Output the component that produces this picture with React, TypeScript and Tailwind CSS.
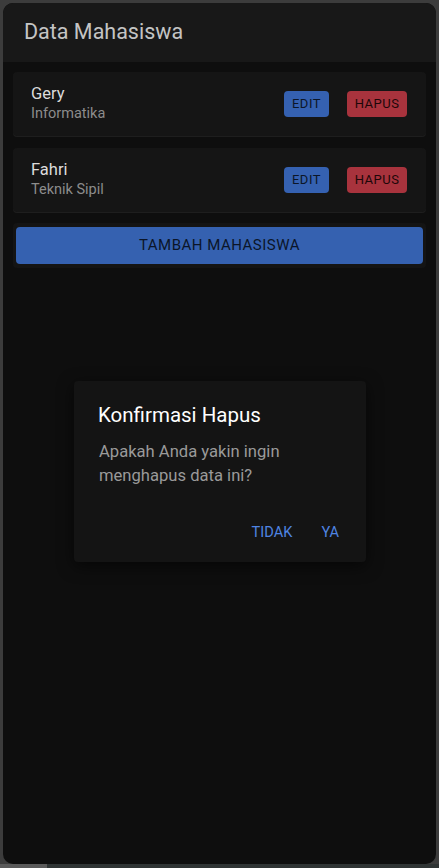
import type { FC } from "react";

type Student = { name: string; major: string };

const students: Student[] = [
  { name: "Gery", major: "Informatika" },
  { name: "Fahri", major: "Teknik Sipil" },
];

const StudentCard: FC<{ student: Student }> = ({ student }) => (
  <div className="mx-[10px] mt-[9px] flex h-[64px] items-center rounded-[4px] bg-[#151515] pl-[18px] pr-[19px] shadow-[0_1px_0_#1e1e1e]">
    <div className="flex flex-1 flex-col">
      <span className="text-[16.5px] leading-[20px] text-[#dcdcdc]">{student.name}</span>
      <span className="text-[14.5px] leading-[20px] text-[#8c8c8c]">{student.major}</span>
    </div>
    <button className="h-[26px] w-[45px] rounded-[4px] bg-[#3561b1] text-[13px] tracking-[0.5px] text-[#0c1628]">EDIT</button>
    <button className="ml-[18px] h-[26px] w-[60px] rounded-[4px] bg-[#a8333d] text-[13px] tracking-[0.5px] text-[#1d0709]">HAPUS</button>
  </div>
);

export default function App() {
  return (
    <div className="flex h-[868px] w-[439px] flex-col bg-[#3c3c3c] font-['Roboto',sans-serif]">
      <div className="relative mx-[3px] mt-[3px] flex h-[861px] flex-col overflow-hidden rounded-[10px] bg-[#0e0e0e]">
        <div className="flex h-[59px] shrink-0 items-center bg-[#181818] px-[21px]">
          <h1 className="text-[21.5px] font-normal text-[#c4c4c4]">Data Mahasiswa</h1>
        </div>
        <div className="flex flex-col gap-[3px] pt-[1px]">
          {students.map((s) => (
            <StudentCard key={s.name} student={s} />
          ))}
        </div>
        <div className="mx-[10px] mt-[11px] rounded-[4px] bg-[#141414] px-[3px] py-[4px]">
          <button className="h-[37px] w-full rounded-[4px] bg-[#3561b0] text-[15px] tracking-[0.5px] text-[#0b1528]">
            TAMBAH MAHASISWA
          </button>
        </div>

        <div className="absolute left-[71px] top-[378px] flex h-[181px] w-[292px] flex-col rounded-[4px] bg-[#141414] px-[24px] pt-[21px] shadow-[0_4px_16px_rgba(0,0,0,0.6)]">
          <h2 className="text-[20.5px] leading-[26px] text-white">Konfirmasi Hapus</h2>
          <p className="mt-[12px] pl-[1px] text-[16.6px] leading-[24px] text-[#9a9a9a]">
            Apakah Anda yakin ingin menghapus data ini?
          </p>
          <div className="mt-auto mb-[18px] flex justify-end gap-[29px] pr-[3px]">
            <button className="text-[14.6px] text-[#4f84e2]">TIDAK</button>
            <button className="text-[14.6px] text-[#4f84e2]">YA</button>
          </div>
        </div>
      </div>
      <div className="mt-auto flex h-[4px]">
        <div className="w-[47px] bg-[#5a5a5a]" />
        <div className="flex-1 bg-[#2f3434]" />
      </div>
    </div>
  );
}
